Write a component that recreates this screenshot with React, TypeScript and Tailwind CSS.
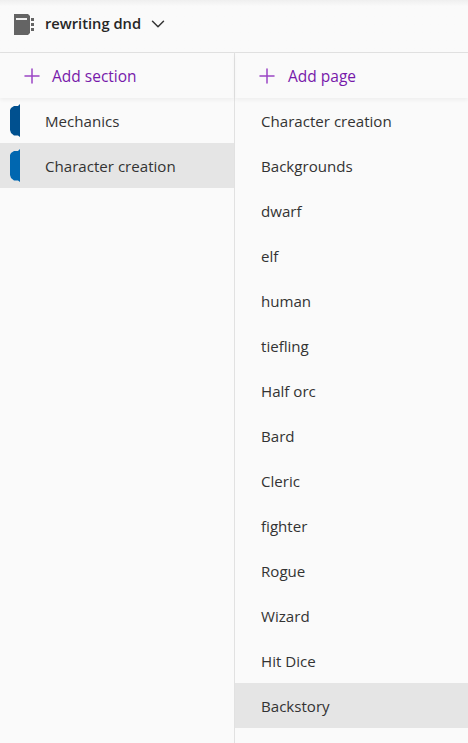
import { ChevronDown, Plus } from "lucide-react";

const sections = [
  { title: "Mechanics", tab: "text-[#00508f]" },
  { title: "Character creation", tab: "text-[#0067b0]", active: true },
];

const pages = [
  "Character creation",
  "Backgrounds",
  "dwarf",
  "elf",
  "human",
  "tiefling",
  "Half orc",
  "Bard",
  "Cleric",
  "fighter",
  "Rogue",
  "Wizard",
  "Hit Dice",
  "Backstory",
];

function NotebookIcon() {
  return (
    <svg width="21" height="22" viewBox="0 0 21 22" className="shrink-0">
      <path d="M1 1h14l2 2v17l-2 2H1z" fill="#646464" />
      <rect x="3" y="5" width="11" height="2" fill="#f0f0f0" />
      <rect x="18" y="5" width="3" height="3" fill="#646464" />
      <rect x="18" y="10" width="3" height="3" fill="#646464" />
      <rect x="18" y="15" width="3" height="3" fill="#646464" />
    </svg>
  );
}

function SectionTab({ className }: { className: string }) {
  return (
    <svg width="10" height="33" viewBox="0 0 10 33" className={className}>
      <path d="M10 0v33l-2-1.500H4L1 29l-1-3V6l1-2 3-2h4z" fill="currentColor" />
    </svg>
  );
}

function AddRow({ label, gap }: { label: string; gap: string }) {
  return (
    <div className={`flex h-[45px] items-center pl-5 text-[15.5px] text-[#7719aa] shadow-[0_2px_4px_rgba(0,0,0,0.05)] ${gap}`}>
      <Plus size={24} strokeWidth={1.5} className="text-[#9a45c4]" />
      <span className="pt-[2px]">{label}</span>
    </div>
  );
}

export default function App() {
  return (
    <div className="flex h-[743px] w-[468px] flex-col overflow-hidden bg-[#fafafa] font-['Open_Sans',sans-serif] text-[#333]">
      <div className="flex h-[53px] shrink-0 items-center border-b border-[#e1e1e1] bg-gradient-to-b from-[#efefef] via-[#fafafa] via-[12%] to-[#fafafa] pb-[5px] pl-[13px]">
        <NotebookIcon />
        <span className="ml-[11px] text-[14.7px] font-semibold text-[#262626]">rewriting dnd</span>
        <ChevronDown size={22} strokeWidth={1.6} className="ml-[6px] text-[#333]" />
      </div>

      <div className="flex min-h-0 flex-1">
        <div className="w-[234px] shrink-0">
          <AddRow label="Add section" gap="gap-2" />
          {sections.map((section) => (
            <div
              key={section.title}
              className={`flex h-[45px] items-center pl-[10px] text-[15.1px] ${section.active ? "bg-[#e5e5e5]" : ""}`}
            >
              <SectionTab className={section.tab} />
              <span className="ml-[25px] pt-[2px]">{section.title}</span>
            </div>
          ))}
        </div>

        <div className="min-w-0 flex-1 border-l border-[#e1e1e1]">
          <AddRow label="Add page" gap="gap-[9px]" />
          {pages.map((page) => (
            <div
              key={page}
              className={`flex h-[45px] items-center pl-[26px] pt-[2px] text-[15.1px] ${page === "Backstory" ? "bg-[#e5e5e5]" : ""}`}
            >
              {page}
            </div>
          ))}
        </div>
      </div>
    </div>
  );
}
